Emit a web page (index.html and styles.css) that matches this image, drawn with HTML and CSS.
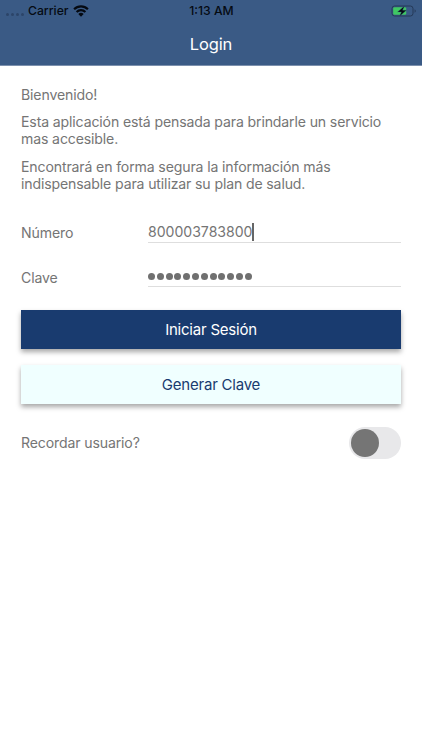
FILE: index.html
```
<!DOCTYPE html>
<html lang="es">
<head>
    <meta charset="utf-8">
    <title>Login</title>
    <link rel="stylesheet" href="styles.css">
</head>
<body>
    <header>
        <div class="status">
            <div class="carrier">
                <span class="signal"><i></i><i></i><i></i><i></i></span>
                <span class="carrier-name">Carrier</span>
                <svg width="16" height="12" viewBox="0 0 16 12">
                    <path d="M1.1 4.3a9.8 9.8 0 0 1 13.8 0M3.6 6.9a6.2 6.2 0 0 1 8.8 0" fill="none" stroke="#050a12" stroke-width="2.2"/>
                    <path d="M8 11.8 5.3 9.1a3.8 3.8 0 0 1 5.4 0z" fill="#050a12"/>
                </svg>
            </div>
            <span class="time">1:13 AM</span>
            <svg class="battery" width="26" height="12" viewBox="0 0 26 12">
                <rect x="1" y="1" width="21" height="10" rx="2.6" fill="none" stroke="#253957"/>
                <path d="M23.6 4.2v3.6a2 2 0 0 0 0-3.6z" fill="#253957"/>
                <rect x="2.2" y="2.2" width="13" height="7.6" rx="1.4" fill="#3fc862"/>
                <path d="M13.4.9 6.6 6.9h3.8L8.6 11.2l6.8-6h-3.8z" fill="#050a12" stroke="#3a5a85" stroke-width=".3"/>
            </svg>
        </div>
        <h1>Login</h1>
    </header>

    <main>
        <p>Bienvenido!</p>
        <p>Esta aplicación está pensada para brindarle un servicio<br>mas accesible.</p>
        <p>Encontrará en forma segura la información más<br>indispensable para utilizar su plan de salud.</p>

        <form>
            <div class="row">
                <label>Número</label>
                <div class="field"><span class="number">800003783800</span><span class="caret"></span></div>
            </div>
            <div class="row">
                <label>Clave</label>
                <div class="field password"><i></i><i></i><i></i><i></i><i></i><i></i><i></i><i></i><i></i><i></i><i></i><i></i></div>
            </div>
            <button type="button" class="primary">Iniciar Sesión</button>
            <button type="button" class="secondary">Generar Clave</button>
            <div class="remember">
                <label>Recordar usuario?</label>
                <div class="switch"><div class="knob"></div></div>
            </div>
        </form>
    </main>
</body>
</html>
```
FILE: styles.css
```
* {
    box-sizing: border-box;
}

body {
    margin: 0;
    background: #fff;
    color: #757575;
    font-family: Inter, "Liberation Sans", sans-serif;
    font-size: 14.1px;
    letter-spacing: -0.14px;
}

header {
    height: 66px;
    background: #3a5a85;
    border-bottom: 1px solid #7c90ad;
}

.status {
    display: grid;
    grid-template-columns: 1fr auto 1fr;
    align-items: center;
    height: 21px;
    padding: 0 5px 0 6px;
    color: #050a12;
    font-size: 12.2px;
    font-weight: 500;
    letter-spacing: 0;
}

.carrier {
    display: flex;
    align-items: center;
}

.signal {
    display: flex;
    gap: 2px;
    padding-top: 7px;
    margin-right: 4px;
}

.signal i {
    width: 3px;
    height: 3px;
    border-radius: 50%;
    background: #2c4569;
}

.carrier-name {
    margin-right: 4px;
}

.battery {
    justify-self: end;
}

h1 {
    margin: 12px 0 0;
    color: #fff;
    font-size: 16.5px;
    font-weight: 400;
    line-height: 22px;
    text-align: center;
}

main {
    padding: 20px 21px;
}

p {
    margin: 0 0 10.3px;
    line-height: 17.1px;
}

form {
    padding-top: 7.6px;
}

.row {
    display: flex;
    align-items: center;
    height: 45px;
}

.row label {
    width: 127px;
}

.field {
    display: flex;
    align-items: center;
    flex: 1;
    height: 21px;
    border-bottom: 1px solid #dedede;
}

.number {
    letter-spacing: -0.02px;
}

.caret {
    width: 2px;
    height: 18px;
    background: #666;
}

.password {
    gap: 1.8px;
    height: 19px;
}

.password i {
    width: 7px;
    height: 7px;
    border-radius: 50%;
    background: #707070;
}

button {
    display: block;
    width: 100%;
    height: 39px;
    margin: 0 0 16px;
    padding: 0;
    border: 0;
    box-shadow: 0 3px 5px rgba(0, 0, 0, 0.35);
    font-family: inherit;
    font-size: 15px;
    letter-spacing: -0.22px;
}

.primary {
    margin-top: 10px;
    background: #193b6f;
    color: #fff;
}

.secondary {
    background: #f0ffff;
    color: #193b6f;
}

.remember {
    display: flex;
    align-items: center;
    justify-content: space-between;
    margin-top: 23px;
}

.switch {
    width: 52px;
    height: 32px;
    padding: 2px;
    border-radius: 16px;
    background: #e8e8ea;
}

.knob {
    width: 28px;
    height: 28px;
    border-radius: 50%;
    background: #757575;
}
```
